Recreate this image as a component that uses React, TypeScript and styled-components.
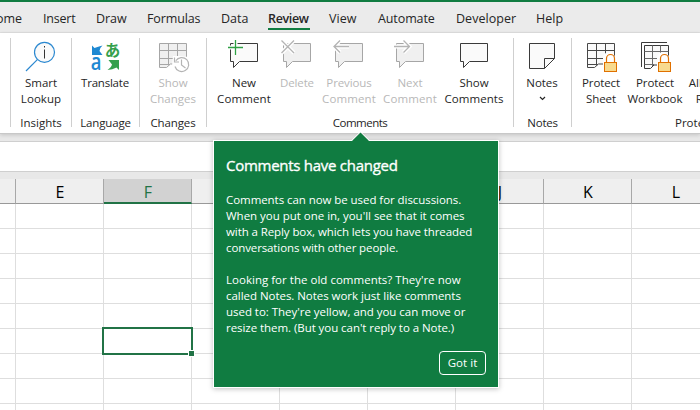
import React from 'react';
import styled, { createGlobalStyle } from 'styled-components';

const Global = createGlobalStyle`
  * { box-sizing: border-box; }
  html, body { margin: 0; padding: 0; overflow: hidden; }
`;

const Window = styled.div`
  position: relative;
  width: 700px;
  height: 410px;
  overflow: hidden;
  display: flex;
  flex-direction: column;
  background: #e8e8e8;
  color: #262626;
  font-family: 'Open Sans', 'Noto Sans', sans-serif;
  font-size: 11.5px;
  line-height: 16px;
  white-space: nowrap;
`;

const TabBar = styled.nav`
  display: flex;
  flex: none;
  height: 33px;
  border-top: 2px solid #107c41;
  border-bottom: 1px solid #e0e0e0;
  background: #ebebeb;
  font-size: 12.5px;
  line-height: 34px;
`;

const Tab = styled.div<{ $w: number; $gap: number; $ls?: number; $active?: boolean }>`
  flex: none;
  width: ${p => p.$w}px;
  margin-right: ${p => p.$gap}px;
  height: 28px;
  letter-spacing: ${p => p.$ls ?? 0}px;
  font-weight: ${p => (p.$active ? 600 : 400)};
  border-bottom: 2px solid ${p => (p.$active ? '#107c41' : 'transparent')};

  &:first-of-type {
    margin-left: -13px;
  }
`;

const Ribbon = styled.div`
  position: relative;
  display: flex;
  flex: none;
  height: 101px;
  padding-top: 5px;
  background: #fff;
  border-bottom: 1px solid #c8c8c8;
  box-shadow: 0 1px 4px rgba(0, 0, 0, 0.16);
`;

const Group = styled.section<{ $w: number }>`
  flex: none;
  display: flex;
  flex-direction: column;
  width: ${p => p.$w}px;
  height: 89px;
  border-right: 1px solid #cfcfcf;
`;

const Buttons = styled.div<{ $pad?: number }>`
  display: flex;
  flex: none;
  height: 77px;
  padding-left: ${p => p.$pad ?? 0}px;
  padding-top: 2px;
`;

const GroupLabel = styled.div<{ $ls?: number; $left?: number }>`
  text-align: ${p => (p.$left ? 'left' : 'center')};
  padding-left: ${p => p.$left ?? 0}px;
  letter-spacing: ${p => p.$ls ?? 0}px;
`;

const RibbonButton = styled.div<{ $w: number; $off?: boolean }>`
  flex: none;
  display: flex;
  flex-direction: column;
  align-items: center;
  width: ${p => p.$w}px;
  color: ${p => (p.$off ? '#b8b8b8' : '#262626')};
`;

const IconBox = styled.svg`
  display: block;
  width: 32px;
  height: 33px;
  margin-bottom: 2px;
  flex: none;
  overflow: visible;
  fill: none;
`;

const Line = styled.span<{ $ls?: number }>`
  height: 16px;
  letter-spacing: ${p => p.$ls ?? 0}px;
`;

const Chevron = styled.svg`
  width: 7px;
  height: 5px;
  margin-top: 5px;
  fill: none;
  stroke: #262626;
  stroke-width: 1.2;
`;

const FormulaBar = styled.div`
  flex: none;
  height: 31px;
  margin-top: 7px;
  background: #fff;
  border-top: 1px solid #cfcfcf;
  border-bottom: 1px solid #cfcfcf;
`;

const Headers = styled.div`
  display: flex;
  flex: none;
  height: 32px;
  padding-top: 7px;
`;

const Header = styled.div<{ $w?: number; $selected?: boolean }>`
  flex: none;
  width: ${p => p.$w ?? 88}px;
  height: 25px;
  padding-left: 1px;
  border-right: 1px solid #a8a8a8;
  border-bottom: ${p => (p.$selected ? '2px solid #217346' : '1px solid #999')};
  background: ${p => (p.$selected ? '#d2d2d2' : '#efefef')};
  color: ${p => (p.$selected ? '#217346' : '#000')};
  font-size: 16px;
  line-height: 27px;
  text-align: center;
`;

const Grid = styled.div`
  display: grid;
  flex: none;
  grid-template-columns: 16px repeat(8, 88px);
  grid-auto-rows: 25px;
  background: #fff;
`;

const Cell = styled.div`
  position: relative;
  border-right: 1px solid #dedede;
  border-bottom: 1px solid #dedede;
`;

const Selection = styled.div`
  position: absolute;
  z-index: 1;
  left: -2px;
  top: -2px;
  width: 91px;
  height: 28px;
  border: 2px solid #217346;
`;

const FillHandle = styled.div`
  position: absolute;
  right: -4px;
  bottom: -4px;
  width: 7px;
  height: 7px;
  background: #217346;
  border: 1px solid #fff;
`;

const Callout = styled.aside`
  position: absolute;
  z-index: 2;
  left: 213px;
  top: 140px;
  width: 286px;
  height: 248px;
  padding: 16px 12px 0;
  display: flex;
  flex-direction: column;
  background: #107c41;
  border: 1px solid #fff;
  box-shadow: 0 1px 5px rgba(0, 0, 0, 0.25);
  color: #fff;
`;

const Beak = styled.svg`
  position: absolute;
  left: 137px;
  top: -10px;
  width: 20px;
  height: 11px;
`;

const Title = styled.h1`
  margin: 0 0 18px;
  font-size: 15px;
  font-weight: 500;
  line-height: 17px;
  letter-spacing: -0.27px;
  -webkit-text-stroke: 0.35px #fff;
`;

const Paragraph = styled.p`
  display: flex;
  flex-direction: column;
  margin: 0 0 16px;
`;

const GotIt = styled.button`
  align-self: flex-end;
  width: 47px;
  height: 24px;
  margin-top: -1px;
  padding: 0;
  border: 1px solid #fff;
  border-radius: 4px;
  background: transparent;
  color: #fff;
  font: 11.5px/22px 'Open Sans', sans-serif;
  letter-spacing: 0.05px;
`;

const dark = '#3a3a3a';
const dim = '#a6a6a6';
const sheetOutline = 'M2.5 3.5H29.5V24H13.5L9.5 27.5H2.5Z';

function Bubble({ off }: { off?: boolean }) {
  return (
    <path
      d="M2.5 3.5H29.5V21.5H11.5L5.5 27.5V21.5H2.5Z"
      fill={off ? '#f0f0f0' : '#fafafa'}
      stroke={off ? dim : dark}
    />
  );
}

function Mark({ d, color }: { d: string; color: string }) {
  return (
    <>
      <path d={d} stroke="#fff" strokeWidth="4" />
      <path d={d} stroke={color} strokeWidth="1.3" />
    </>
  );
}

function Lock() {
  return (
    <>
      <path d="M18 21V18a6 6 0 0 1 12 0v3h2.5v11.5h-14.5z" fill="#fff" />
      <path d="M21.5 22v-3.5a4 4 0 0 1 8 0v3.5" fill="#fff" stroke="#e07000" strokeWidth="1.2" />
      <rect x="19.5" y="22.5" width="12" height="9" fill="#f8da8e" stroke="#e07000" />
    </>
  );
}

function Sheet({ fill, stroke }: { fill: string; stroke: string }) {
  return (
    <>
      <path d={sheetOutline} fill={fill} />
      <path
        d={`${sheetOutline}M11.5 3.5V25.5M20.5 3.5V24M2.5 10.5H29.5M2.5 18.5H29.5M2.5 24.5H13`}
        stroke={stroke}
      />
    </>
  );
}

type ToolProps = { w: number; off?: boolean; icon?: React.ReactNode; lines: [string, number?][]; menu?: boolean };

function Tool({ w, off, icon, lines, menu }: ToolProps) {
  return (
    <RibbonButton $w={w} $off={off}>
      <IconBox viewBox="0 0 32 33">{icon}</IconBox>
      {lines.map(([text, ls]) => (
        <Line key={text} $ls={ls}>{text}</Line>
      ))}
      {menu && <Chevron viewBox="0 0 7 5"><path d="M1 1l2.5 2.5L6 1" /></Chevron>}
    </RibbonButton>
  );
}

const tabs: [string, number, number, number, boolean?][] = [
  ['Home', 35, 21, -0.1],
  ['Insert', 32, 21, -0.2],
  ['Draw', 30, 21, -0.05],
  ['Formulas', 53, 21, -0.12],
  ['Data', 27, 20, 0],
  ['Review', 42, 19, -0.35, true],
  ['View', 27, 22, 0.05],
  ['Automate', 56, 22, -0.1],
  ['Developer', 60, 20, 0.03],
  ['Help', 27, 0, 0.05],
];

const columns: { name?: string; width?: number }[] = [
  { width: 16 }, { name: 'E' }, { name: 'F' }, {}, {}, {}, { name: 'J' }, { name: 'K' }, { name: 'L' },
];

const selectedCell = 47;

export default function App() {
  return (
    <Window>
      <Global />
      <TabBar>
        {tabs.map(([name, w, gap, ls, active]) => (
          <Tab key={name} $w={w} $gap={gap} $ls={ls} $active={active}>{name}</Tab>
        ))}
      </TabBar>

      <Ribbon>
        <Group $w={11} />
        <Group $w={61}>
          <Buttons>
            <Tool
              w={60}
              lines={[['Smart', -0.03], ['Lookup', 0.05]]}
              icon={
                <>
                  <path d="M12.3 19.7L1 31" stroke="#2b88d0" strokeWidth="1.2" />
                  <circle cx="19.5" cy="12.3" r="10" fill="#fafafa" stroke="#2b88d0" strokeWidth="1.2" />
                  <path d="M19.5 9.5V18.5M19.5 6V7.5" stroke="#333" />
                </>
              }
            />
          </Buttons>
          <GroupLabel>Insights</GroupLabel>
        </Group>
        <Group $w={68}>
          <Buttons>
            <Tool
              w={66}
              lines={[['Translate', -0.22]]}
              icon={
                <>
                  <path d="M3 5.5L5.5 8Q9 6.5 13.5 5.5Q10.5 8 10.5 11L13.5 15H3Z" fill="#1e88d2" />
                  <text transform="translate(1.8 30) scale(.82 1)" fontSize="22.5" fontWeight="600" fill="#1e88d2" fontFamily="Open Sans">a</text>
                  <text x="15.8" y="16.3" fontSize="15.5" fontWeight="700" fill="#35a04c" fontFamily="Noto Sans CJK JP">あ</text>
                  <path d="M19.5 20H30V30L27.5 27.5Q23.5 29.8 18.5 30Q22.5 27 23 24.5Z" fill="#35a04c" />
                </>
              }
            />
          </Buttons>
          <GroupLabel $ls={-0.14}>Language</GroupLabel>
        </Group>
        <Group $w={67}>
          <Buttons>
            <Tool
              w={66}
              off
              lines={[['Show'], ['Changes', 0.04]]}
              icon={
                <>
                  <Sheet fill="#f0f0f0" stroke={dim} />
                  <path d="M16 16H22L32 17V32H20L15 26Z" fill="#fff" />
                  <path
                    d="M18.8 20.8A7 7 0 1 1 18 26.5M17.5 17.5V22H22M24.5 19.5V25L28.5 28"
                    stroke="#b4b4b4"
                    strokeWidth="1.2"
                  />
                </>
              }
            />
          </Buttons>
          <GroupLabel $ls={-0.12}>Changes</GroupLabel>
        </Group>
        <Group $w={307}>
          <Buttons $pad={6}>
            <Tool w={62} lines={[['New'], ['Comment', 0.1]]} icon={<><Bubble /><Mark d="M7.5 0V15M0 7.5H15" color="#2ea043" /></>} />
            <Tool w={44} off lines={[['Delete', -0.15]]} icon={<><Bubble off /><Mark d="M.5 .5L13 13M13 .5L.5 13" color="#b4b4b4" /></>} />
            <Tool w={60} off lines={[['Previous', -0.1], ['Comment', 0.1]]} icon={<><Bubble off /><Mark d="M16 6.5H1M7 .5L1 6.5L7 12.5" color="#b4b4b4" /></>} />
            <Tool w={62} off lines={[['Next'], ['Comment', 0.1]]} icon={<><Bubble off /><Mark d="M0 6.5H15.5M9.5 .5L15.5 6.5L9.5 12.5" color="#b4b4b4" /></>} />
            <Tool w={66} lines={[['Show'], ['Comments', 0.08]]} icon={<Bubble />} />
          </Buttons>
          <GroupLabel $ls={-0.5}>Comments</GroupLabel>
        </Group>
        <Group $w={58}>
          <Buttons>
            <Tool
              w={56}
              menu
              lines={[['Notes', -0.05]]}
              icon={<path d="M3.5 3.5H28.5V18.5L18.5 28.5H3.5ZM18.5 28.5V18.5H28.5" fill="#fafafa" stroke={dark} />}
            />
          </Buttons>
          <GroupLabel $ls={-0.25}>Notes</GroupLabel>
        </Group>
        <Group $w={210}>
          <Buttons $pad={3}>
            <Tool
              w={52}
              lines={[['Protect', -0.08], ['Sheet', -0.1]]}
              icon={<><Sheet fill="#fafafa" stroke="#484848" /><Lock /></>}
            />
            <Tool
              w={56}
              lines={[['Protect', -0.08], ['Workbook', 0]]}
              icon={
                <>
                  <path d="M2.5 27V2.5H28" stroke={dark} />
                  <path d="M5.5 5.5H29.5V25H15L11.5 28.5H5.5Z" fill="#fafafa" stroke={dark} />
                  <path d="M13.5 5.5V26M21.5 5.5V25M5.5 11.5H29.5M5.5 18.5H29.5M5.5 24.5H15" stroke="#6a6a6a" />
                  <Lock />
                </>
              }
            />
            <Tool w={64} lines={[['Allow Edit'], ['Ranges']]} />
          </Buttons>
          <GroupLabel $left={103}>Protect</GroupLabel>
        </Group>
      </Ribbon>

      <FormulaBar />

      <Headers>
        {columns.map(({ name, width }, i) => (
          <Header key={i} $w={width} $selected={name === 'F'}>{name}</Header>
        ))}
      </Headers>
      <Grid>
        {Array.from({ length: 81 }, (_, i) => (
          <Cell key={i}>
            {i === selectedCell && <Selection><FillHandle /></Selection>}
          </Cell>
        ))}
      </Grid>

      <Callout>
        <Beak viewBox="0 0 20 11">
          <path d="M0 11L9.5 1.5L19 11Z" fill="#107c41" />
          <path d="M.5 9.5L9.5 .7L18.5 9.5" fill="none" stroke="#fff" strokeWidth=".8" />
        </Beak>
        <Title>Comments have changed</Title>
        <Paragraph>
          <Line $ls={-0.06}>Comments can now be used for discussions.</Line>
          <Line $ls={-0.02}>When you put one in, you'll see that it comes</Line>
          <Line $ls={-0.09}>with a Reply box, which lets you have threaded</Line>
          <Line $ls={-0.11}>conversations with other people.</Line>
        </Paragraph>
        <Paragraph>
          <Line $ls={0.02}>Looking for the old comments? They're now</Line>
          <Line $ls={-0.04}>called Notes. Notes work just like comments</Line>
          <Line $ls={-0.03}>used to: They're yellow, and you can move or</Line>
          <Line $ls={-0.055}>resize them. (But you can't reply to a Note.)</Line>
        </Paragraph>
        <GotIt>Got it</GotIt>
      </Callout>
    </Window>
  );
}
